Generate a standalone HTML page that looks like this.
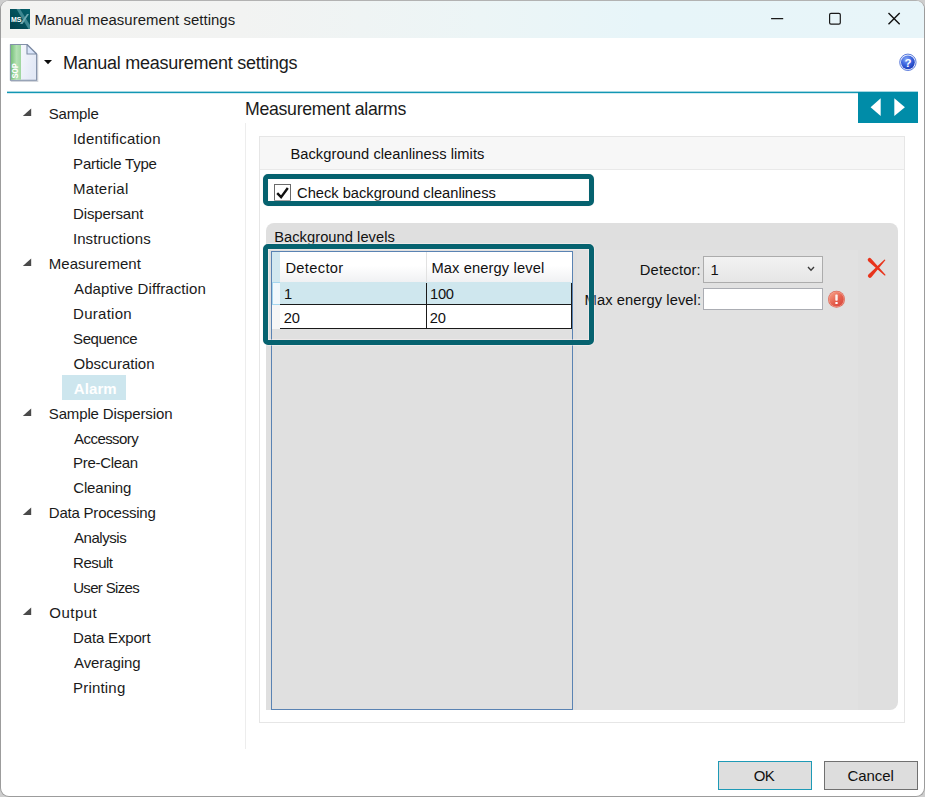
<!DOCTYPE html>
<html>
<head>
<meta charset="utf-8">
<title>Manual measurement settings</title>
<style>
*{box-sizing:border-box;margin:0;padding:0}
html,body{width:925px;height:797px;overflow:hidden;background:#cecece}
body{font-family:"Liberation Sans",sans-serif;color:#111;position:relative}
.abs{position:absolute}
.t{position:absolute;white-space:nowrap;line-height:1}
#win{position:absolute;left:0;top:0;width:925px;height:797px;border:1px solid #9c9c9c;border-top-color:#b2b2b2;border-radius:9px;background:#fff;overflow:hidden}
#titlebar{position:absolute;left:0;top:0;width:923px;height:37px;background:linear-gradient(90deg,#f3f3f1 0%,#f2f3f2 26%,#ecf5f6 52%,#e7f5f9 70%,#e8f5f9 100%)}
.nav{font-size:15px;color:#1a1a1a}
.c{font-size:14.7px;color:#111}
</style>
</head>
<body>
<div id="win">
  <div id="titlebar"></div>
  <!-- app icon -->
  <svg class="abs" style="left:9px;top:8px" width="20" height="20" viewBox="0 0 20 20">
    <defs><linearGradient id="mg" x1="0" y1="1" x2="1" y2="0"><stop offset="0" stop-color="#003c48"/><stop offset="1" stop-color="#05626d"/></linearGradient></defs><rect width="20" height="20" fill="url(#mg)"/>
    <path d="M6.5 0 L10 0 L20 16 L20 20 L18.5 20 Z" fill="#3d8791"/>
    <path d="M17 5 L19 5 L12.5 15 L10 15 Z" fill="#6fa9b0"/>
    <text x="1" y="13" font-family="Liberation Sans, sans-serif" font-size="7" font-weight="bold" fill="#fff">MS</text>
  </svg>
  <div class="t" style="left:33.41px;top:12.00px;font-size:14.9px;letter-spacing:0.048px;color:#1b1b1b">Manual measurement settings</div>
  <!-- window controls -->
  <svg class="abs" style="left:769px;top:9px" width="140" height="18" viewBox="0 0 140 18">
    <path d="M1.1 8.6 H13.2" stroke="#1a1a1a" stroke-width="1.1" fill="none"/>
    <rect x="59.6" y="3.4" width="10.7" height="10.7" rx="1.4" stroke="#1a1a1a" stroke-width="1.2" fill="none"/>
    <path d="M118.5 3.1 L129.7 14.3 M129.7 3.1 L118.5 14.3" stroke="#111" stroke-width="1.4" fill="none"/>
  </svg>

  <!-- header -->
  <svg class="abs" style="left:7px;top:41px" width="34" height="42" viewBox="0 0 34 42">
    <defs>
      <linearGradient id="g1" x1="0" x2="1" y1="0" y2="0"><stop offset="0" stop-color="#76c079"/><stop offset="0.55" stop-color="#b4e1b4"/><stop offset="1" stop-color="#9fd6a0"/></linearGradient>
      <linearGradient id="g2" x1="0" x2="1" y1="0" y2="0.3"><stop offset="0" stop-color="#ffffff"/><stop offset="1" stop-color="#e3e9f6"/></linearGradient>
    </defs>
    <path d="M3.4 3.6 H19.6 L29.7 13.2 V39.3 H3.4 Z" fill="#c9ccd4" stroke="#c9ccd4" stroke-width="1.2" opacity="0.8"/>
    <path d="M2.4 2.5 H19 L28.6 12 V38.2 H2.4 Z" fill="url(#g2)" stroke="#8391a9" stroke-width="1.1" stroke-linejoin="round"/>
    <path d="M2.9 3 H13 V37.7 H2.9 Z" fill="url(#g1)"/>
    <path d="M19 2.5 V12 H28.6 Z" fill="#dbe6fb" stroke="#7f8da6" stroke-width="1.1" stroke-linejoin="round"/>
    <text transform="translate(10.3,36.6) rotate(-90)" font-family="Liberation Mono, monospace" font-size="8.2" font-weight="bold" textLength="15.6" lengthAdjust="spacingAndGlyphs" fill="#fff">SOP</text>
  </svg>
  <svg class="abs" style="left:42px;top:58px" width="10" height="7" viewBox="0 0 10 7"><path d="M1 1.1 H9 L5 5.3 Z" fill="#0d0d0d"/></svg>
  <div class="t" style="left:61.93px;top:53.00px;font-size:18px;letter-spacing:-0.254px;color:#1b1b1b">Manual measurement settings</div>
  <!-- help icon -->
  <svg class="abs" style="left:897px;top:52px" width="20" height="20" viewBox="0 0 20 20">
    <defs><radialGradient id="hg" cx="0.38" cy="0.28" r="0.85"><stop offset="0" stop-color="#86a6f4"/><stop offset="0.45" stop-color="#3f68e0"/><stop offset="1" stop-color="#1231b0"/></radialGradient></defs>
    <circle cx="9.9" cy="9.3" r="8.2" fill="#eef2fc" stroke="#5b7bdc" stroke-width="1"/>
    <circle cx="9.9" cy="9.3" r="6.9" fill="url(#hg)"/>
    <text x="9.9" y="13.6" text-anchor="middle" font-family="Liberation Sans, sans-serif" font-size="11.5" font-weight="bold" fill="#fff">?</text>
  </svg>
  <!-- teal rule -->
  <div class="abs" style="left:6px;top:90px;width:911px;height:1px;background:#a4d7e2"></div>
  <div class="abs" style="left:6px;top:91px;width:911px;height:1px;background:#1297b4"></div>
  <div class="abs" style="left:6px;top:92px;width:911px;height:1px;background:#d3ecf1"></div>
  <div class="abs" style="left:857px;top:91px;width:60px;height:31px;background:#008ca8"></div>
  <svg class="abs" style="left:857px;top:91px" width="60" height="31" viewBox="0 0 60 31">
    <path d="M12.6 15.2 L22.7 6.3 V24.1 Z" fill="#fff"/>
    <path d="M46.9 15.2 L36.3 6.3 V24.1 Z" fill="#fff"/>
  </svg>

  <!-- sidebar -->
  <svg class="abs" style="left:21px;top:106px" width="10" height="10" viewBox="0 0 10 10"><path d="M9.2 1.4 V9 H0.8 Z" fill="#4a4a4a"/></svg>
  <div class="t" style="left:47.80px;top:105.00px;font-size:15px;letter-spacing:-0.185px;color:#1a1a1a">Sample</div>
  <div class="t" style="left:71.92px;top:130.00px;font-size:15px;letter-spacing:0.257px;color:#1a1a1a">Identification</div>
  <div class="t" style="left:72.10px;top:155.00px;font-size:15px;letter-spacing:-0.221px;color:#1a1a1a">Particle Type</div>
  <div class="t" style="left:72.10px;top:180.00px;font-size:15px;letter-spacing:0.254px;color:#1a1a1a">Material</div>
  <div class="t" style="left:72.10px;top:205.00px;font-size:15px;letter-spacing:-0.157px;color:#1a1a1a">Dispersant</div>
  <div class="t" style="left:71.92px;top:230.00px;font-size:15px;letter-spacing:0.094px;color:#1a1a1a">Instructions</div>
  <svg class="abs" style="left:21px;top:256px" width="10" height="10" viewBox="0 0 10 10"><path d="M9.2 1.4 V9 H0.8 Z" fill="#4a4a4a"/></svg>
  <div class="t" style="left:47.80px;top:255.00px;font-size:15px;letter-spacing:0.034px;color:#1a1a1a">Measurement</div>
  <div class="t" style="left:73.07px;top:280.00px;font-size:15px;letter-spacing:0.101px;color:#1a1a1a">Adaptive Diffraction</div>
  <div class="t" style="left:72.10px;top:305.00px;font-size:15px;letter-spacing:0.256px;color:#1a1a1a">Duration</div>
  <div class="t" style="left:72.10px;top:330.00px;font-size:15px;letter-spacing:-0.44px;color:#1a1a1a">Sequence</div>
  <div class="t" style="left:72.54px;top:355.00px;font-size:15px;letter-spacing:0.017px;color:#1a1a1a">Obscuration</div>
  <div class="abs" style="left:61px;top:374px;width:64px;height:25px;background:#cde6ee"></div>
  <div class="t" style="left:72.71px;top:380.00px;font-size:15px;letter-spacing:0.11px;color:#fff;font-weight:bold">Alarm</div>
  <svg class="abs" style="left:21px;top:406px" width="10" height="10" viewBox="0 0 10 10"><path d="M9.2 1.4 V9 H0.8 Z" fill="#4a4a4a"/></svg>
  <div class="t" style="left:47.80px;top:405.00px;font-size:15px;letter-spacing:-0.138px;color:#1a1a1a">Sample Dispersion</div>
  <div class="t" style="left:73.07px;top:430.00px;font-size:15px;letter-spacing:-0.563px;color:#1a1a1a">Accessory</div>
  <div class="t" style="left:72.10px;top:454.00px;font-size:15px;letter-spacing:-0.32px;color:#1a1a1a">Pre-Clean</div>
  <div class="t" style="left:72.20px;top:479.00px;font-size:15px;letter-spacing:-0.143px;color:#1a1a1a">Cleaning</div>
  <svg class="abs" style="left:21px;top:505px" width="10" height="10" viewBox="0 0 10 10"><path d="M9.2 1.4 V9 H0.8 Z" fill="#4a4a4a"/></svg>
  <div class="t" style="left:47.80px;top:504.00px;font-size:15px;letter-spacing:-0.217px;color:#1a1a1a">Data Processing</div>
  <div class="t" style="left:73.07px;top:529.00px;font-size:15px;letter-spacing:-0.47px;color:#1a1a1a">Analysis</div>
  <div class="t" style="left:72.10px;top:554.00px;font-size:15px;letter-spacing:-0.539px;color:#1a1a1a">Result</div>
  <div class="t" style="left:72.15px;top:579.00px;font-size:15px;letter-spacing:-0.667px;color:#1a1a1a">User Sizes</div>
  <svg class="abs" style="left:21px;top:605px" width="10" height="10" viewBox="0 0 10 10"><path d="M9.2 1.4 V9 H0.8 Z" fill="#4a4a4a"/></svg>
  <div class="t" style="left:48.24px;top:604.00px;font-size:15px;letter-spacing:0.504px;color:#1a1a1a">Output</div>
  <div class="t" style="left:72.10px;top:629.00px;font-size:15px;letter-spacing:-0.168px;color:#1a1a1a">Data Export</div>
  <div class="t" style="left:73.07px;top:654.00px;font-size:15px;letter-spacing:-0.106px;color:#1a1a1a">Averaging</div>
  <div class="t" style="left:72.10px;top:679.00px;font-size:15px;letter-spacing:0.184px;color:#1a1a1a">Printing</div>
  <div class="abs" style="left:244px;top:122px;width:1px;height:626px;background:#ededed"></div>

  <div class="t" style="left:243.94px;top:100.00px;font-size:17.7px;letter-spacing:-0.275px;color:#1b1b1b">Measurement alarms</div>

  <!-- panel -->
  <div class="abs" style="left:258px;top:135px;width:646px;height:587px;border:1px solid #e6e6e6;background:#fff"></div>
  <div class="abs" style="left:259px;top:136px;width:644px;height:33px;background:#f7f7f7;border-bottom:1px solid #e9e9e9"></div>
  <div class="t" style="left:289.41px;top:146.00px;font-size:14.7px;letter-spacing:0.047px;color:#111">Background cleanliness limits</div>

  <!-- checkbox -->
  <div class="abs" style="left:273px;top:183px;width:17px;height:17px;border:1px solid #6a6a6a;background:#fff"></div>
  <svg class="abs" style="left:273px;top:183px" width="17" height="17" viewBox="0 0 17 17"><path d="M3.2 9.2 L7.1 13.2 L13.8 4" stroke="#111" stroke-width="2.4" fill="none"/></svg>
  <div class="t" style="left:296.10px;top:185.00px;font-size:14.7px;letter-spacing:-0.017px;color:#111">Check background cleanliness</div>

  <!-- group -->
  <div class="abs" style="left:265px;top:222px;width:632px;height:487px;background:#dfdfdf;border-radius:8px 8px 8px 0"></div>
  <div class="abs" style="left:576px;top:249px;width:281px;height:460px;background:#e1e1e1"></div>
  <div class="t" style="left:273.21px;top:229.00px;font-size:14.7px;letter-spacing:0.037px;color:#111">Background levels</div>

  <!-- grid -->
  <div class="abs" style="left:270px;top:250px;width:302px;height:459px;border:1px solid #5a83b3;background:#e0e0e0"></div>
  <div class="abs" style="left:271px;top:251px;width:8px;height:30px;background:#d3e8f0"></div>
  <div class="abs" style="left:279px;top:251px;width:147px;height:30px;background:linear-gradient(#fff 0%,#fff 45%,#f0f1f3 100%);border-right:1px solid #e2e2e2"></div>
  <div class="abs" style="left:426px;top:251px;width:145px;height:30px;background:linear-gradient(#fff 0%,#fff 45%,#f0f1f3 100%)"></div>
  <div class="t" style="left:284.41px;top:260.00px;font-size:14.7px;letter-spacing:0.321px;color:#111">Detector</div>
  <div class="t" style="left:430.41px;top:260.00px;font-size:14.7px;letter-spacing:0.118px;color:#111">Max energy level</div>
  <!-- row 1 -->
  <div class="abs" style="left:271px;top:281px;width:8px;height:23px;background:#f1f8fc;border:1px solid #a6d6ee;border-right:none"></div>
  <div class="abs" style="left:279px;top:281px;width:292px;height:23px;background:#cfe7ee"></div>
  <!-- row 2 -->
  <div class="abs" style="left:271px;top:304px;width:8px;height:24px;background:#f6f6f6"></div>
  <div class="abs" style="left:279px;top:304px;width:292px;height:24px;background:#fff"></div>
  <!-- cell lines -->
  <div class="abs" style="left:279px;top:303px;width:292px;height:1px;background:#1a1a1a"></div>
  <div class="abs" style="left:279px;top:327px;width:292px;height:1px;background:#1a1a1a"></div>
  <div class="abs" style="left:425px;top:282px;width:1px;height:46px;background:#1a1a1a"></div>
  <div class="abs" style="left:570px;top:282px;width:1px;height:46px;background:#1a1a1a"></div>
  <div class="t" style="left:283.00px;top:286.00px;font-size:14.7px;color:#111">1</div>
  <div class="t" style="left:429.00px;top:286.00px;font-size:14.7px;letter-spacing:-0.274px;color:#111">100</div>
  <div class="t" style="left:282.84px;top:310.00px;font-size:14.7px;letter-spacing:-0.36px;color:#111">20</div>
  <div class="t" style="left:428.84px;top:310.00px;font-size:14.7px;letter-spacing:-0.36px;color:#111">20</div>

  <!-- form -->
  <div class="t" style="left:638.81px;top:262.00px;font-size:14.7px;letter-spacing:0.161px;color:#111">Detector:</div>
  <div class="t" style="left:583.61px;top:292.00px;font-size:14.7px;letter-spacing:0.081px;color:#111">Max energy level:</div>
  <div class="abs" style="left:702px;top:255px;width:120px;height:27px;border:1px solid #acacac;background:linear-gradient(#f2f2f2,#e6e6e6)"></div>
  <div class="t" style="left:709.40px;top:262.00px;font-size:14.7px;color:#111">1</div>
  <svg class="abs" style="left:805px;top:265px" width="10" height="7" viewBox="0 0 10 7"><path d="M2 1 L5 4.3 L8 1" stroke="#3c3c3c" stroke-width="1.35" fill="none"/></svg>
  <div class="abs" style="left:702px;top:287px;width:120px;height:22px;border:1px solid #abadb3;background:#fff"></div>
  <!-- error icon -->
  <svg class="abs" style="left:825px;top:288px" width="20" height="20" viewBox="0 0 20 20">
    <defs><linearGradient id="eg" x1="0.15" y1="0.1" x2="0.85" y2="0.9"><stop offset="0" stop-color="#f4957c"/><stop offset="0.55" stop-color="#e5604e"/><stop offset="1" stop-color="#da4b40"/></linearGradient></defs>
    <circle cx="10.5" cy="10.3" r="8.5" fill="#de6a5a"/>
    <circle cx="10.5" cy="10.3" r="7.8" fill="#f3a595"/>
    <circle cx="10.5" cy="10.3" r="7.2" fill="url(#eg)"/>
    <rect x="9.3" y="5.4" width="2.4" height="6.4" rx="0.7" fill="#fdf3f0"/>
    <rect x="9.3" y="12.9" width="2.4" height="2.2" rx="0.7" fill="#fff"/>
  </svg>
  <!-- red X -->
  <svg class="abs" style="left:864px;top:255px" width="24" height="24" viewBox="0 0 24 24">
    <path d="M3.26 5.15 L19.51 19.39 A0.55 0.55 0 0 0 20.29 18.61 L5.94 2.45 A1.9 1.9 0 0 0 3.26 5.15 Z" fill="#e8341c"/>
    <path d="M6.36 21.27 L20.14 4.51 A0.6 0.6 0 0 0 19.26 3.69 L3.44 18.53 A2.0 2.0 0 0 0 6.36 21.27 Z" fill="#e8341c"/>
  </svg>

  <!-- teal highlight boxes -->
  <div class="abs" style="left:262px;top:173px;width:331px;height:32px;border:5px solid #06626f;border-radius:5px;box-shadow:0 0 0 0.8px rgba(255,244,244,0.55), inset 0 0 0 0.8px rgba(255,244,244,0.55)"></div>
  <div class="abs" style="left:262px;top:243px;width:331px;height:101px;border:5px solid #06626f;border-radius:5px;box-shadow:0 0 0 0.8px rgba(255,244,244,0.55), inset 0 0 0 0.8px rgba(255,244,244,0.55)"></div>

  <!-- buttons -->
  <div class="abs" style="left:717px;top:760px;width:94px;height:29px;border:1px solid #1e9ab6;background:#dedede"></div>
  <div class="abs" style="left:823px;top:760px;width:94px;height:29px;border:1px solid #707070;background:#dddddd"></div>
  <div class="t" style="left:752.84px;top:767.00px;font-size:15px;letter-spacing:-0.68px;color:#111">OK</div>
  <div class="t" style="left:846.50px;top:767.00px;font-size:15px;letter-spacing:-0.078px;color:#111">Cancel</div>
</div>
</body>
</html>
